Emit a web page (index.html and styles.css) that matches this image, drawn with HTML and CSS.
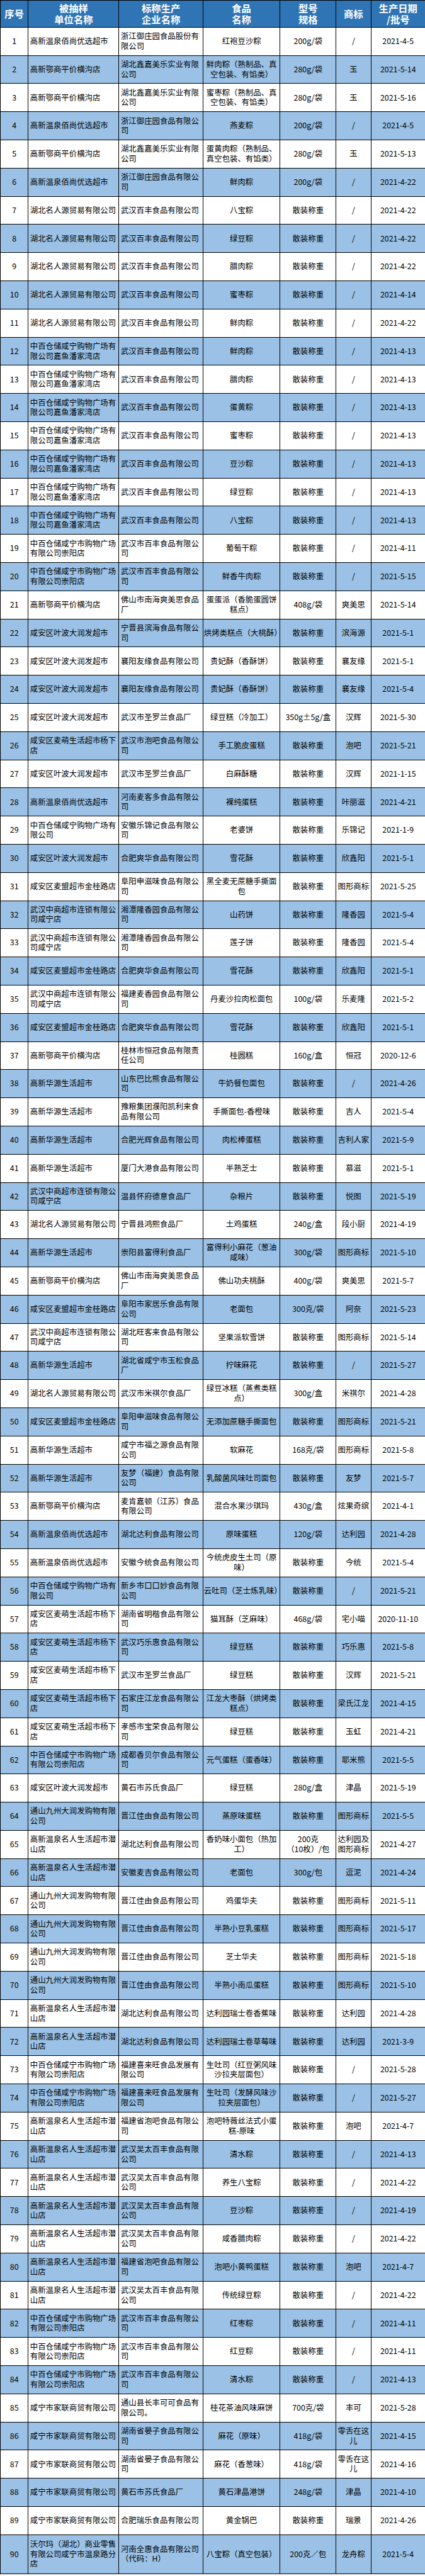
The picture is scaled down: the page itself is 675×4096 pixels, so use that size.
FILE: index.html
```html
<!DOCTYPE html>
<html lang="zh-CN">
<head>
<meta charset="utf-8">
<title>抽检结果</title>
<link rel="stylesheet" href="styles.css">
</head>
<body>
<table class="t">
<colgroup><col class="c1"><col class="c2"><col class="c3"><col class="c4"><col class="c5"><col class="c6"><col class="c7"></colgroup>
<thead>
<tr><th>序号</th><th>被抽样<br>单位名称</th><th>标称生产<br>企业名称</th><th>食品<br>名称</th><th>型号<br>规格</th><th>商标</th><th>生产日期<br>/批号</th></tr>
</thead>
<tbody>
<tr><td>1</td><td class="l">高新温泉佰尚优选超市</td><td class="l">浙江御庄园食品股份有限公司</td><td>红袍豆沙粽</td><td>200g/袋</td><td>/</td><td>2021-4-5</td></tr>
<tr class="b"><td>2</td><td class="l">高新鄂商平价横沟店</td><td class="l">湖北鑫嘉美乐实业有限公司</td><td>鲜肉粽（熟制品、真空包装、有馅类）</td><td>280g/袋</td><td>玉</td><td>2021-5-14</td></tr>
<tr><td>3</td><td class="l">高新鄂商平价横沟店</td><td class="l">湖北鑫嘉美乐实业有限公司</td><td>蜜枣粽（熟制品、真空包装、有馅类）</td><td>280g/袋</td><td>玉</td><td>2021-5-16</td></tr>
<tr class="b"><td>4</td><td class="l">高新温泉佰尚优选超市</td><td class="l">浙江御庄园食品有限公司</td><td>燕麦粽</td><td>200g/袋</td><td>/</td><td>2021-4-5</td></tr>
<tr><td>5</td><td class="l">高新鄂商平价横沟店</td><td class="l">湖北鑫嘉美乐实业有限公司</td><td>蛋黄肉粽（熟制品、真空包装、有馅类）</td><td>280g/袋</td><td>玉</td><td>2021-5-13</td></tr>
<tr class="b"><td>6</td><td class="l">高新温泉佰尚优选超市</td><td class="l">浙江御庄园食品有限公司</td><td>鲜肉粽</td><td>200g/袋</td><td>/</td><td>2021-4-22</td></tr>
<tr><td>7</td><td class="l">湖北名人源贸易有限公司</td><td class="l">武汉百丰食品有限公司</td><td>八宝粽</td><td>散装称重</td><td>/</td><td>2021-4-22</td></tr>
<tr class="b"><td>8</td><td class="l">湖北名人源贸易有限公司</td><td class="l">武汉百丰食品有限公司</td><td>绿豆粽</td><td>散装称重</td><td>/</td><td>2021-4-22</td></tr>
<tr><td>9</td><td class="l">湖北名人源贸易有限公司</td><td class="l">武汉百丰食品有限公司</td><td>腊肉粽</td><td>散装称重</td><td>/</td><td>2021-4-22</td></tr>
<tr class="b"><td>10</td><td class="l">湖北名人源贸易有限公司</td><td class="l">武汉百丰食品有限公司</td><td>蜜枣粽</td><td>散装称重</td><td>/</td><td>2021-4-14</td></tr>
<tr><td>11</td><td class="l">湖北名人源贸易有限公司</td><td class="l">武汉百丰食品有限公司</td><td>鲜肉粽</td><td>散装称重</td><td>/</td><td>2021-4-22</td></tr>
<tr class="b"><td>12</td><td class="l">中百仓储咸宁购物广场有限公司嘉鱼潘家湾店</td><td class="l">武汉百丰食品有限公司</td><td>鲜肉粽</td><td>散装称重</td><td>/</td><td>2021-4-13</td></tr>
<tr><td>13</td><td class="l">中百仓储咸宁购物广场有限公司嘉鱼潘家湾店</td><td class="l">武汉百丰食品有限公司</td><td>腊肉粽</td><td>散装称重</td><td>/</td><td>2021-4-13</td></tr>
<tr class="b"><td>14</td><td class="l">中百仓储咸宁购物广场有限公司嘉鱼潘家湾店</td><td class="l">武汉百丰食品有限公司</td><td>蛋黄粽</td><td>散装称重</td><td>/</td><td>2021-4-13</td></tr>
<tr><td>15</td><td class="l">中百仓储咸宁购物广场有限公司嘉鱼潘家湾店</td><td class="l">武汉百丰食品有限公司</td><td>蜜枣粽</td><td>散装称重</td><td>/</td><td>2021-4-13</td></tr>
<tr class="b"><td>16</td><td class="l">中百仓储咸宁购物广场有限公司嘉鱼潘家湾店</td><td class="l">武汉百丰食品有限公司</td><td>豆沙粽</td><td>散装称重</td><td>/</td><td>2021-4-13</td></tr>
<tr><td>17</td><td class="l">中百仓储咸宁购物广场有限公司嘉鱼潘家湾店</td><td class="l">武汉百丰食品有限公司</td><td>绿豆粽</td><td>散装称重</td><td>/</td><td>2021-4-13</td></tr>
<tr class="b"><td>18</td><td class="l">中百仓储咸宁购物广场有限公司嘉鱼潘家湾店</td><td class="l">武汉百丰食品有限公司</td><td>八宝粽</td><td>散装称重</td><td>/</td><td>2021-4-13</td></tr>
<tr><td>19</td><td class="l">中百仓储咸宁市购物广场有限公司崇阳店</td><td class="l">武汉市百丰食品有限公司</td><td>葡萄干粽</td><td>散装称重</td><td>/</td><td>2021-4-11</td></tr>
<tr class="b"><td>20</td><td class="l">中百仓储咸宁市购物广场有限公司崇阳店</td><td class="l">武汉市百丰食品有限公司</td><td>鲜香牛肉粽</td><td>散装称重</td><td>/</td><td>2021-5-15</td></tr>
<tr><td>21</td><td class="l">高新鄂商平价横沟店</td><td class="l">佛山市南海爽美思食品厂</td><td>蛋蛋派（香脆蛋圆饼糕点）</td><td>408g/袋</td><td>爽美思</td><td>2021-5-14</td></tr>
<tr class="b"><td>22</td><td class="l">咸安区叶波大润发超市</td><td class="l">宁晋县滨海食品有限公司</td><td>烘烤类糕点（大桃酥）</td><td>散装称重</td><td>滨海源</td><td>2021-5-1</td></tr>
<tr><td>23</td><td class="l">咸安区叶波大润发超市</td><td class="l">襄阳友缘食品有限公司</td><td>贵妃酥（香酥饼）</td><td>散装称重</td><td>襄友缘</td><td>2021-5-1</td></tr>
<tr class="b"><td>24</td><td class="l">咸安区叶波大润发超市</td><td class="l">襄阳友缘食品有限公司</td><td>贵妃酥（香酥饼）</td><td>散装称重</td><td>襄友缘</td><td>2021-5-4</td></tr>
<tr><td>25</td><td class="l">咸安区叶波大润发超市</td><td class="l">武汉市圣罗兰食品厂</td><td>绿豆糕（冷加工）</td><td>350g±5g/盒</td><td>汉辉</td><td>2021-5-30</td></tr>
<tr class="b"><td>26</td><td class="l">咸安区麦萌生活超市杨下店</td><td class="l">武汉市泡吧食品有限公司</td><td>手工脆皮蛋糕</td><td>散装称重</td><td>泡吧</td><td>2021-5-21</td></tr>
<tr><td>27</td><td class="l">咸安区叶波大润发超市</td><td class="l">武汉市圣罗兰食品厂</td><td>白麻酥糖</td><td>散装称重</td><td>汉辉</td><td>2021-1-15</td></tr>
<tr class="b"><td>28</td><td class="l">高新温泉佰尚优选超市</td><td class="l">河南麦客多食品有限公司</td><td>裸纯蛋糕</td><td>散装称重</td><td>咔丽滋</td><td>2021-4-21</td></tr>
<tr><td>29</td><td class="l">中百仓储咸宁购物广场有限公司</td><td class="l">安徽乐锦记食品有限公司</td><td>老婆饼</td><td>散装称重</td><td>乐锦记</td><td>2021-1-9</td></tr>
<tr class="b"><td>30</td><td class="l">咸安区叶波大润发超市</td><td class="l">合肥爽华食品有限公司</td><td>雪花酥</td><td>散装称重</td><td>欣鑫阳</td><td>2021-5-1</td></tr>
<tr><td>31</td><td class="l">咸安区麦盟超市金桂路店</td><td class="l">阜阳申滋味食品有限公司</td><td>黑全麦无蔗糖手撕面包</td><td>散装称重</td><td>图形商标</td><td>2021-5-25</td></tr>
<tr class="b"><td>32</td><td class="l">武汉中商超市连锁有限公司咸宁店</td><td class="l">湘潭隆香园食品有限公司</td><td>山药饼</td><td>散装称重</td><td>隆香园</td><td>2021-5-4</td></tr>
<tr><td>33</td><td class="l">武汉中商超市连锁有限公司咸宁店</td><td class="l">湘潭隆香园食品有限公司</td><td>莲子饼</td><td>散装称重</td><td>隆香园</td><td>2021-5-4</td></tr>
<tr class="b"><td>34</td><td class="l">咸安区麦盟超市金桂路店</td><td class="l">合肥爽华食品有限公司</td><td>雪花酥</td><td>散装称重</td><td>欣鑫阳</td><td>2021-5-1</td></tr>
<tr><td>35</td><td class="l">武汉中商超市连锁有限公司咸宁店</td><td class="l">福建麦香园食品有限公司</td><td>丹麦沙拉肉松面包</td><td>100g/袋</td><td>乐麦隆</td><td>2021-5-2</td></tr>
<tr class="b"><td>36</td><td class="l">咸安区麦盟超市金桂路店</td><td class="l">合肥爽华食品有限公司</td><td>雪花酥</td><td>散装称重</td><td>欣鑫阳</td><td>2021-5-1</td></tr>
<tr><td>37</td><td class="l">高新鄂商平价横沟店</td><td class="l">桂林市恒冠食品有限责任公司</td><td>桂圆糕</td><td>160g/盒</td><td>恒冠</td><td>2020-12-6</td></tr>
<tr class="b"><td>38</td><td class="l">高新华源生活超市</td><td class="l">山东巴比熊食品有限公司</td><td>牛奶餐包面包</td><td>散装称重</td><td>/</td><td>2021-4-26</td></tr>
<tr><td>39</td><td class="l">高新华源生活超市</td><td class="l">豫粮集团濮阳凯利来食品有限公司</td><td>手撕面包-香橙味</td><td>散装称重</td><td>吉人</td><td>2021-5-4</td></tr>
<tr class="b"><td>40</td><td class="l">高新华源生活超市</td><td class="l">合肥光辉食品有限公司</td><td>肉松棒蛋糕</td><td>散装称重</td><td>吉利人家</td><td>2021-5-9</td></tr>
<tr><td>41</td><td class="l">高新华源生活超市</td><td class="l">厦门大港食品有限公司</td><td>半熟芝士</td><td>散装称重</td><td>慕滋</td><td>2021-5-1</td></tr>
<tr class="b"><td>42</td><td class="l">武汉中商超市连锁有限公司咸宁店</td><td class="l">温县怀府德意食品厂</td><td>杂粮片</td><td>散装称重</td><td>悦图</td><td>2021-5-19</td></tr>
<tr><td>43</td><td class="l">湖北名人源贸易有限公司</td><td class="l">宁晋县鸿熙食品厂</td><td>土鸡蛋糕</td><td>240g/盒</td><td>段小厨</td><td>2021-4-19</td></tr>
<tr class="b"><td>44</td><td class="l">高新华源生活超市</td><td class="l">崇阳县富得利食品厂</td><td>富得利小麻花（葱油咸味）</td><td>300g/袋</td><td>图形商标</td><td>2021-5-10</td></tr>
<tr><td>45</td><td class="l">高新鄂商平价横沟店</td><td class="l">佛山市南海爽美思食品厂</td><td>佛山功夫桃酥</td><td>400g/袋</td><td>爽美思</td><td>2021-5-7</td></tr>
<tr class="b"><td>46</td><td class="l">咸安区麦盟超市金桂路店</td><td class="l">阜阳市家居乐食品有限公司</td><td>老面包</td><td>300克/袋</td><td>阿奈</td><td>2021-5-23</td></tr>
<tr><td>47</td><td class="l">武汉中商超市连锁有限公司咸宁店</td><td class="l">湖北旺客来食品有限公司</td><td>坚果派软雪饼</td><td>散装称重</td><td>图形商标</td><td>2021-5-14</td></tr>
<tr class="b"><td>48</td><td class="l">高新华源生活超市</td><td class="l">湖北省咸宁市玉松食品厂</td><td>拧味麻花</td><td>散装称重</td><td>/</td><td>2021-5-27</td></tr>
<tr><td>49</td><td class="l">湖北名人源贸易有限公司</td><td class="l">武汉市米祺尔食品厂</td><td>绿豆冰糕（蒸煮类糕点）</td><td>300g/盒</td><td>米祺尔</td><td>2021-4-28</td></tr>
<tr class="b"><td>50</td><td class="l">咸安区麦盟超市金桂路店</td><td class="l">阜阳申滋味食品有限公司</td><td>无添加蔗糖手撕面包</td><td>散装称重</td><td>图形商标</td><td>2021-5-21</td></tr>
<tr><td>51</td><td class="l">高新华源生活超市</td><td class="l">咸宁市福之源食品有限公司</td><td>软麻花</td><td>168克/袋</td><td>图形商标</td><td>2021-5-8</td></tr>
<tr class="b"><td>52</td><td class="l">高新华源生活超市</td><td class="l">友梦（福建）食品有限公司</td><td>乳酸菌风味吐司面包</td><td>散装称重</td><td>友梦</td><td>2021-5-7</td></tr>
<tr><td>53</td><td class="l">高新鄂商平价横沟店</td><td class="l">麦肯嘉顿（江苏）食品有限公司</td><td>混合水果沙琪玛</td><td>430g/盒</td><td>炫果奇缤</td><td>2021-4-1</td></tr>
<tr class="b"><td>54</td><td class="l">高新温泉佰尚优选超市</td><td class="l">湖北达利食品有限公司</td><td>原味蛋糕</td><td>120g/袋</td><td>达利园</td><td>2021-4-28</td></tr>
<tr><td>55</td><td class="l">高新温泉佰尚优选超市</td><td class="l">安徽今统食品有限公司</td><td>今统虎皮生土司（原味）</td><td>散装称重</td><td>今统</td><td>2021-5-4</td></tr>
<tr class="b"><td>56</td><td class="l">中百仓储咸宁购物广场有限公司</td><td class="l">新乡市口口妙食品有限公司</td><td>云吐司（芝士炼乳味）</td><td>散装称重</td><td>/</td><td>2021-5-21</td></tr>
<tr><td>57</td><td class="l">咸安区麦萌生活超市杨下店</td><td class="l">湖南省明楷食品有限公司</td><td>猫耳酥（芝麻味）</td><td>468g/袋</td><td>宅小喵</td><td>2020-11-10</td></tr>
<tr class="b"><td>58</td><td class="l">咸安区麦萌生活超市杨下店</td><td class="l">武汉巧乐惠食品有限公司</td><td>绿豆糕</td><td>散装称重</td><td>巧乐惠</td><td>2021-5-8</td></tr>
<tr><td>59</td><td class="l">咸安区麦萌生活超市杨下店</td><td class="l">武汉市圣罗兰食品厂</td><td>绿豆糕</td><td>散装称重</td><td>汉辉</td><td>2021-5-21</td></tr>
<tr class="b"><td>60</td><td class="l">咸安区麦萌生活超市杨下店</td><td class="l">石家庄江龙食品有限公司</td><td>江龙大枣酥（烘烤类糕点）</td><td>散装称重</td><td>梁氏江龙</td><td>2021-4-15</td></tr>
<tr><td>61</td><td class="l">咸安区麦萌生活超市杨下店</td><td class="l">孝感市宝荣食品有限公司</td><td>绿豆糕</td><td>散装称重</td><td>玉虹</td><td>2021-4-21</td></tr>
<tr class="b"><td>62</td><td class="l">中百仓储咸宁市购物广场有限公司崇阳店</td><td class="l">成都香贝尔食品有限公司</td><td>元气蛋糕（蛋香味）</td><td>散装称重</td><td>耶米熊</td><td>2021-5-5</td></tr>
<tr><td>63</td><td class="l">咸安区叶波大润发超市</td><td class="l">黄石市苏氏食品厂</td><td>绿豆糕</td><td>280g/盒</td><td>津晶</td><td>2021-5-19</td></tr>
<tr class="b"><td>64</td><td class="l">通山九州大润发购物有限公司</td><td class="l">晋江佳由食品有限公司</td><td>蒸原味蛋糕</td><td>散装称重</td><td>图形商标</td><td>2021-5-5</td></tr>
<tr><td>65</td><td class="l">高新温泉名人生活超市潜山店</td><td class="l">湖北达利食品有限公司</td><td>香奶味小面包（热加工）</td><td>200克<br>（10枚）/包</td><td>达利园及图形商标</td><td>2021-4-27</td></tr>
<tr class="b"><td>66</td><td class="l">高新温泉名人生活超市潜山店</td><td class="l">安徽麦吉食品有限公司</td><td>老面包</td><td>300g/包</td><td>逗泥</td><td>2021-4-24</td></tr>
<tr><td>67</td><td class="l">通山九州大润发购物有限公司</td><td class="l">晋江佳由食品有限公司</td><td>鸡蛋华夫</td><td>散装称重</td><td>图形商标</td><td>2021-5-11</td></tr>
<tr class="b"><td>68</td><td class="l">通山九州大润发购物有限公司</td><td class="l">晋江佳由食品有限公司</td><td>半熟小豆乳蛋糕</td><td>散装称重</td><td>图形商标</td><td>2021-5-17</td></tr>
<tr><td>69</td><td class="l">通山九州大润发购物有限公司</td><td class="l">晋江佳由食品有限公司</td><td>芝士华夫</td><td>散装称重</td><td>图形商标</td><td>2021-5-18</td></tr>
<tr class="b"><td>70</td><td class="l">通山九州大润发购物有限公司</td><td class="l">晋江佳由食品有限公司</td><td>半熟小南瓜蛋糕</td><td>散装称重</td><td>图形商标</td><td>2021-5-10</td></tr>
<tr><td>71</td><td class="l">高新温泉名人生活超市潜山店</td><td class="l">湖北达利食品有限公司</td><td>达利园瑞士卷香蕉味</td><td>散装称重</td><td>达利园</td><td>2021-4-28</td></tr>
<tr class="b"><td>72</td><td class="l">高新温泉名人生活超市潜山店</td><td class="l">湖北达利食品有限公司</td><td>达利园瑞士卷草莓味</td><td>散装称重</td><td>达利园</td><td>2021-3-9</td></tr>
<tr><td>73</td><td class="l">中百仓储咸宁市购物广场有限公司崇阳店</td><td class="l">福建喜来旺食品发展有限公司</td><td>生吐司（红豆粥风味沙拉夹层面包）</td><td>散装称重</td><td>/</td><td>2021-5-28</td></tr>
<tr class="b"><td>74</td><td class="l">中百仓储咸宁市购物广场有限公司崇阳店</td><td class="l">福建喜来旺食品发展有限公司</td><td>生吐司（发酵风味沙拉夹层面包）</td><td>散装称重</td><td>/</td><td>2021-5-27</td></tr>
<tr><td>75</td><td class="l">高新温泉名人生活超市潜山店</td><td class="l">福建省泡吧食品有限公司</td><td>泡吧特薇丝法式小蛋糕-原味</td><td>散装称重</td><td>泡吧</td><td>2021-4-7</td></tr>
<tr class="b"><td>76</td><td class="l">高新温泉名人生活超市潜山店</td><td class="l">武汉吴太百丰食品有限公司</td><td>清水粽</td><td>散装称重</td><td>/</td><td>2021-4-13</td></tr>
<tr><td>77</td><td class="l">高新温泉名人生活超市潜山店</td><td class="l">武汉吴太百丰食品有限公司</td><td>养生八宝粽</td><td>散装称重</td><td>/</td><td>2021-4-22</td></tr>
<tr class="b"><td>78</td><td class="l">高新温泉名人生活超市潜山店</td><td class="l">武汉吴太百丰食品有限公司</td><td>豆沙粽</td><td>散装称重</td><td>/</td><td>2021-4-19</td></tr>
<tr><td>79</td><td class="l">高新温泉名人生活超市潜山店</td><td class="l">武汉吴太百丰食品有限公司</td><td>咸香腊肉粽</td><td>散装称重</td><td>/</td><td>2021-4-22</td></tr>
<tr class="b"><td>80</td><td class="l">高新温泉名人生活超市潜山店</td><td class="l">福建省泡吧食品有限公司</td><td>泡吧小黄鸭蛋糕</td><td>散装称重</td><td>泡吧</td><td>2021-4-7</td></tr>
<tr><td>81</td><td class="l">高新温泉名人生活超市潜山店</td><td class="l">武汉吴太百丰食品有限公司</td><td>传统绿豆粽</td><td>散装称重</td><td>/</td><td>2021-4-22</td></tr>
<tr class="b"><td>82</td><td class="l">中百仓储咸宁市购物广场有限公司崇阳店</td><td class="l">武汉市百丰食品有限公司</td><td>红枣粽</td><td>散装称重</td><td>/</td><td>2021-4-11</td></tr>
<tr><td>83</td><td class="l">中百仓储咸宁市购物广场有限公司崇阳店</td><td class="l">武汉市百丰食品有限公司</td><td>红豆粽</td><td>散装称重</td><td>/</td><td>2021-4-11</td></tr>
<tr class="b"><td>84</td><td class="l">中百仓储咸宁市购物广场有限公司崇阳店</td><td class="l">武汉市百丰食品有限公司</td><td>清水粽</td><td>散装称重</td><td>/</td><td>2021-4-13</td></tr>
<tr><td>85</td><td class="l">咸宁市家联商贸有限公司</td><td class="l">通山县长丰可可食品有限公司。</td><td>桂花茶油风味麻饼</td><td>700克/袋</td><td>丰可</td><td>2021-5-28</td></tr>
<tr class="b"><td>86</td><td class="l">咸宁市家联商贸有限公司</td><td class="l">湖南省晏子食品有限公司</td><td>麻花（原味）</td><td>418g/袋</td><td>零舌在这儿</td><td>2021-4-15</td></tr>
<tr><td>87</td><td class="l">咸宁市家联商贸有限公司</td><td class="l">湖南省晏子食品有限公司</td><td>麻花（香葱味）</td><td>418g/袋</td><td>零舌在这儿</td><td>2021-4-16</td></tr>
<tr class="b"><td>88</td><td class="l">咸宁市家联商贸有限公司</td><td class="l">黄石市苏氏食品厂</td><td>黄石津晶港饼</td><td>248g/袋</td><td>津晶</td><td>2021-4-10</td></tr>
<tr><td>89</td><td class="l">咸宁市家联商贸有限公司</td><td class="l">合肥瑞乐食品有限公司</td><td>黄金锅巴</td><td>散装称重</td><td>瑞景</td><td>2021-4-26</td></tr>
<tr class="b tall"><td>90</td><td class="l">沃尔玛（湖北）商业零售有限公司咸宁市温泉路分店</td><td class="l">河南全惠食品有限公司（代码：H）</td><td>八宝粽（真空包装）</td><td>200克／包</td><td>龙舟粽</td><td>2021-5-4</td></tr>
</tbody>
</table>
</body>
</html>
```

FILE: styles.css
```css
html, body {
  margin: 0;
  padding: 0;
  background: #ffffff;
}

.t {
  width: 675px;
  border-collapse: collapse;
  table-layout: fixed;
  font-family: "Noto Sans CJK SC", "Noto Sans", sans-serif;
  font-size: 12.4px;
  line-height: 15.6px;
  color: #000000;
}

.c1 { width: 44.3px; }
.c2 { width: 144.2px; }
.c3 { width: 133.3px; }
.c4 { width: 122.7px; }
.c5 { width: 88.6px; }
.c6 { width: 55.5px; }
.c7 { width: 86.4px; }

.t td,
.t th {
  border: 1px solid #000000;
  padding: 0 1px;
  text-align: center;
  vertical-align: middle;
}

.t td.l {
  text-align: left;
  padding: 0 0 0 2.5px;
}

.t tbody tr {
  height: 44.8px;
}

.t thead tr {
  height: 42.9px;
}

.t th {
  background: #2f75b5;
  color: #ffffff;
  font-size: 15.3px;
  line-height: 17.5px;
  font-weight: bold;
}

.t tr.b td {
  background: #9bc2e6;
}

.t tbody tr.tall {
  height: 62.3px;
}
```
